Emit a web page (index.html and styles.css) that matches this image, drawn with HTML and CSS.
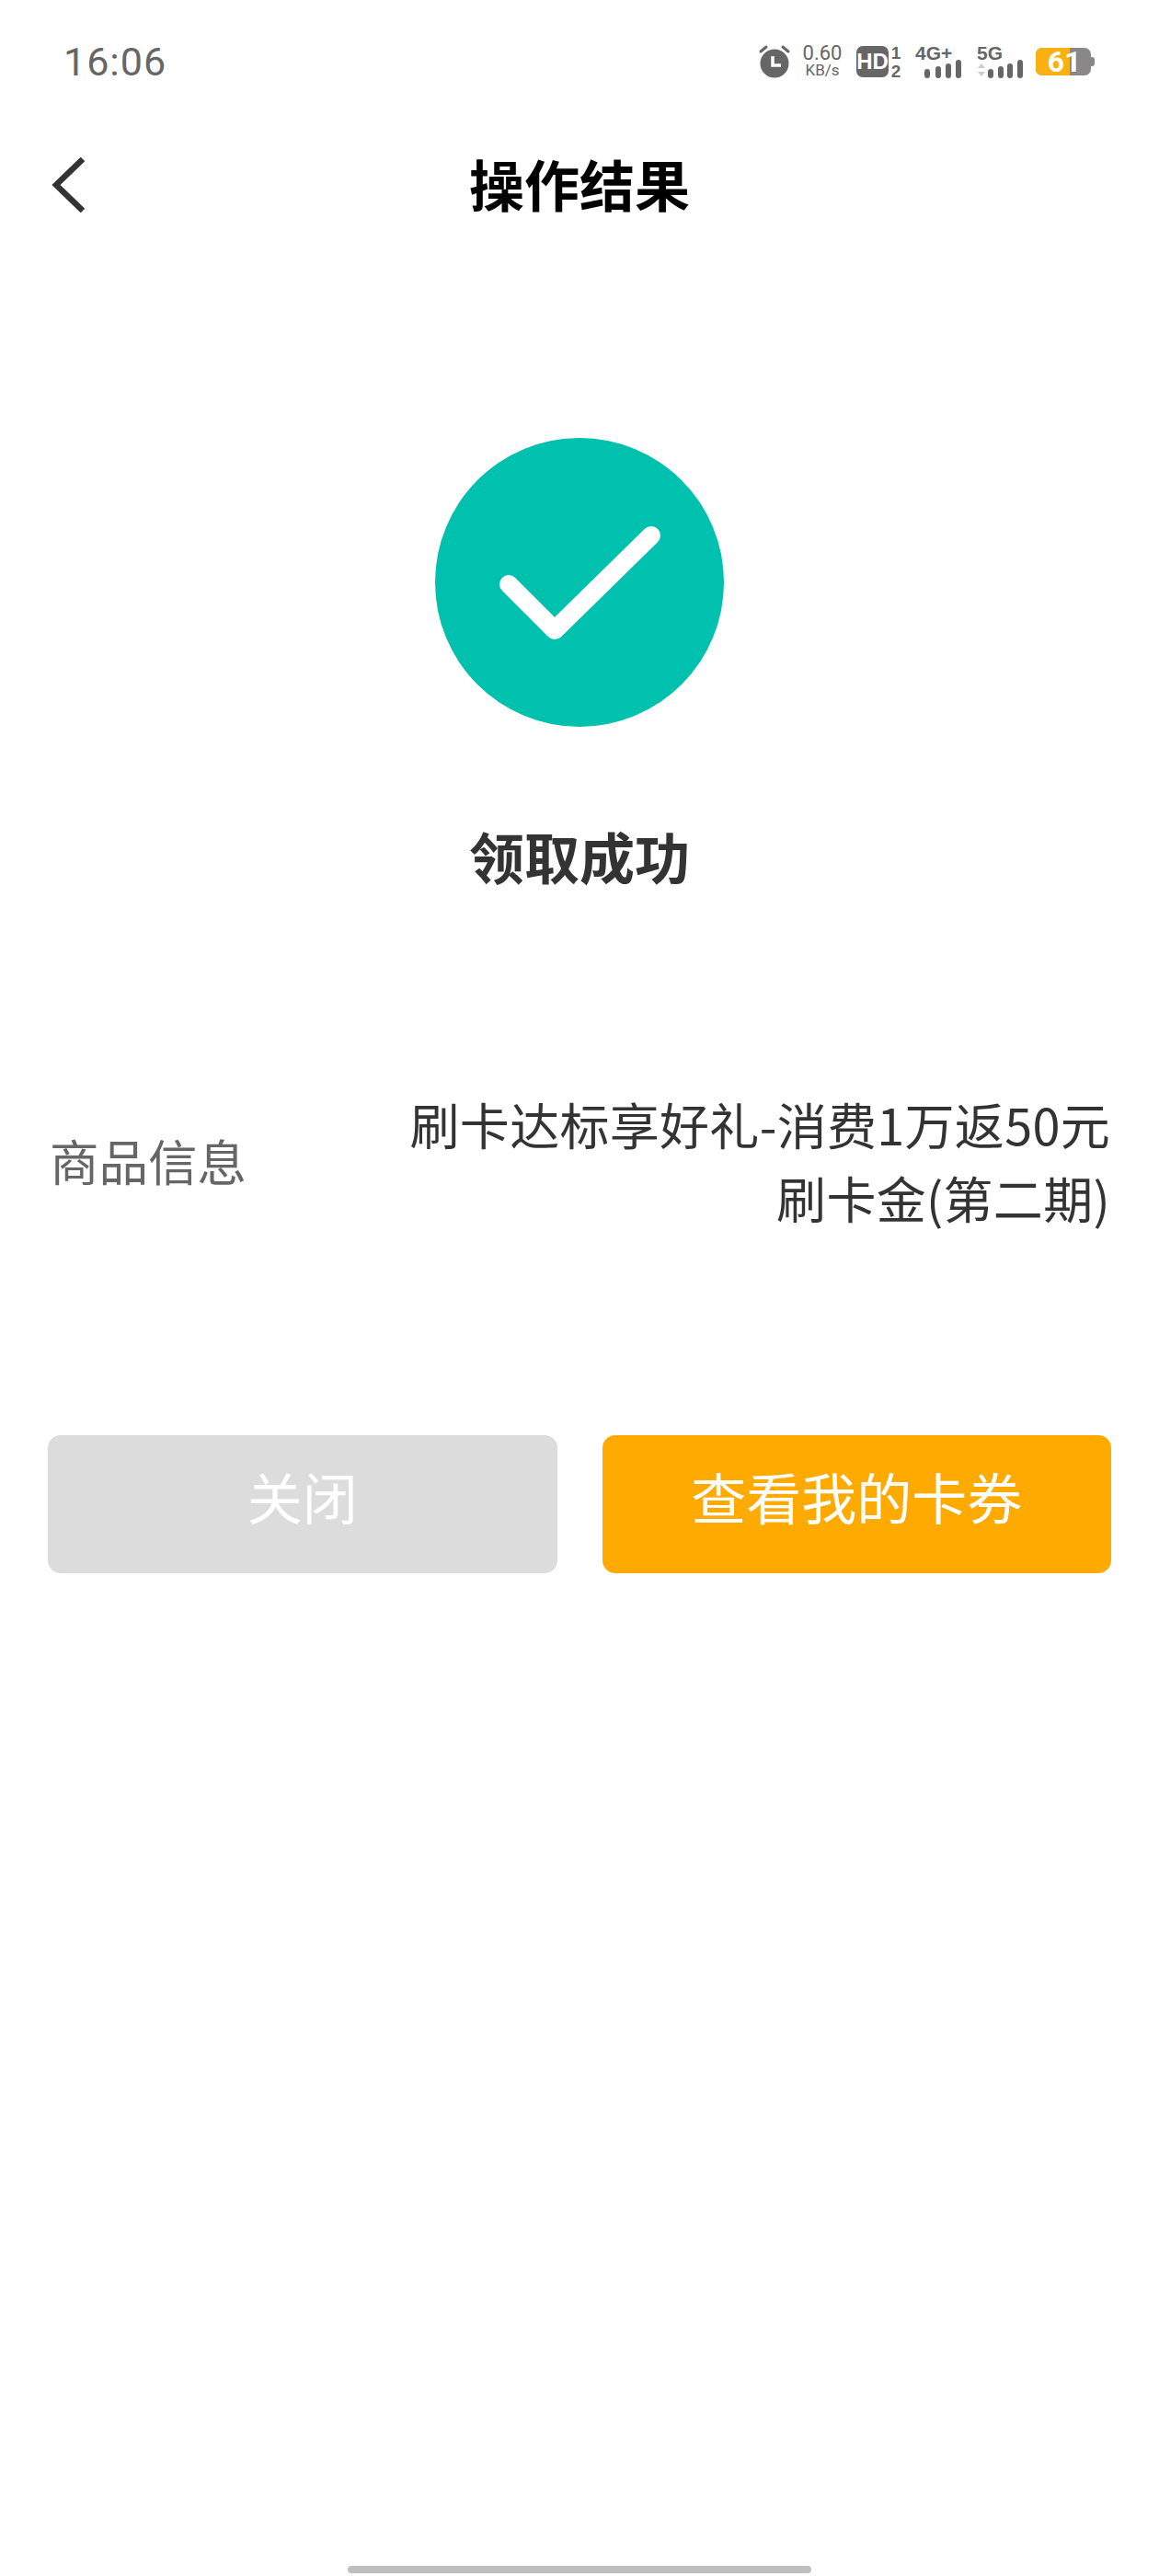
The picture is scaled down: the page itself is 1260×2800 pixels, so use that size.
FILE: index.html
```html
<!DOCTYPE html>
<html lang="zh-CN">

<head>
  <meta charset="UTF-8">
  <meta name="viewport" content="width=device-width, initial-scale=1.0">
  <title>操作结果</title>

  <link rel="stylesheet" href="styles.css">
</head>

<body>
  <!-- status bar -->
  <div class="status-bar">
    <span class="time">16:06</span>
    <div class="status-icons">
      <svg class="ico" width="36" height="40" viewBox="0 0 36 40">
        <circle cx="18" cy="22" r="15.5" fill="#666"/>
        <path d="M3 9l6-5M33 9l-6-5" stroke="#666" stroke-width="3" stroke-linecap="round"/>
        <path d="M16 14v10h9" fill="none" stroke="#fff" stroke-width="3.5"/>
      </svg>
      <svg class="ico speed" width="46" height="40" viewBox="0 0 46 40">
        <text x="23" y="18" class="t-speed">0.60</text>
        <text x="23" y="35" class="t-unit">KB/s</text>
      </svg>
      <svg class="ico hd" width="50" height="36" viewBox="0 0 50 36">
        <rect x="0" y="1" width="35" height="34" rx="7" fill="#666"/>
        <text x="17.5" y="26" class="t-hd">HD</text>
        <text x="43" y="15" class="t-sim">1</text>
        <text x="43" y="35" class="t-sim">2</text>
      </svg>
      <svg class="ico net" width="52" height="36" viewBox="0 0 52 36">
        <text x="0" y="16" class="t-net">4G+</text>
        <rect x="10" y="26" width="6" height="10" rx="3" fill="#666"/>
        <rect x="22" y="23" width="6" height="13" rx="3" fill="#666"/>
        <rect x="33" y="20" width="6" height="16" rx="3" fill="#666"/>
        <rect x="44" y="16" width="6" height="20" rx="3" fill="#666"/>
      </svg>
      <svg class="ico net2" width="52" height="36" viewBox="0 0 52 36">
        <text x="0" y="16" class="t-net">5G</text>
        <path d="M1 25l4-5 4 5zM1 29l4 5 4-5z" fill="#ccc"/>
        <rect x="12" y="26" width="6" height="10" rx="3" fill="#666"/>
        <rect x="23" y="23" width="6" height="13" rx="3" fill="#666"/>
        <rect x="33" y="20" width="6" height="16" rx="3" fill="#666"/>
        <rect x="44" y="16" width="6" height="20" rx="3" fill="#666"/>
      </svg>
      <svg class="ico battery" width="64" height="32" viewBox="0 0 64 32">
        <rect x="0" y="1" width="60" height="30" rx="7" fill="#888"/>
        <path d="M7 1h30v30H7a7 7 0 0 1-7-7V8a7 7 0 0 1 7-7z" fill="#fbb012"/>
        <path d="M60 11h1a3 3 0 0 1 3 3v4a3 3 0 0 1-3 3h-1z" fill="#888"/>
        <text x="31" y="27" class="t-batt">61</text>
      </svg>
    </div>
  </div>

  <!-- title -->
  <div class="nav">
    <svg class="back" width="40" height="60" viewBox="0 0 40 60">
      <path d="M35 2L6 30l29 28" fill="none" stroke="#333" stroke-width="6.5"/>
    </svg>
    <h1>操作结果</h1>
    <span></span>
  </div>

  <div class="result">
    <svg class="ok-icon" width="314" height="314" viewBox="0 0 314 314">
      <circle cx="157" cy="157" r="157" fill="#00c1ad"/>
      <path d="M80 159l50 50L235 106" fill="none" stroke="#fff" stroke-width="20" stroke-linecap="round" stroke-linejoin="round"/>
    </svg>
    <h2>领取成功</h2>
  </div>

  <div class="info">
    <span class="info-label">商品信息</span>
    <p class="info-value">刷卡达标享好礼-消费1万返50元<br>刷卡金(第二期)</p>
  </div>

  <div class="btns">
    <a class="btn btn-close">关闭</a>
    <a class="btn btn-view">查看我的卡券</a>
  </div>

  <div class="home-bar"></div>
</body>

</html>
```

FILE: styles.css
```css
* {
  margin: 0;
  padding: 0;
  box-sizing: border-box;
}

body {
  display: flex;
  flex-direction: column;
  height: 2800px;
  background: #fff;
  font-family: "Noto Sans CJK SC", "Liberation Sans", sans-serif;
  overflow: hidden;
}

/* status bar */
.status-bar {
  display: flex;
  justify-content: space-between;
  align-items: center;
  height: 134px;
  padding: 0 70px 0 69px;
}

.time {
  font-family: Roboto, sans-serif;
  font-size: 43px;
  letter-spacing: 1px;
  color: #666;
}

.status-icons {
  display: flex;
  align-items: center;
}

.ico {
  display: block;
  overflow: visible;
}

.speed {
  margin-left: 11px;
}

.hd {
  margin-left: 14px;
}

.net {
  margin-left: 14px;
}

.net2 {
  margin-left: 15px;
}

.battery {
  margin-left: 12px;
}

.t-speed,
.t-unit {
  font-family: Roboto, sans-serif;
  fill: #666;
  text-anchor: middle;
}

.t-speed {
  font-size: 22px;
}

.t-unit {
  font-size: 17px;
}

.t-hd {
  font-family: "Liberation Sans", sans-serif;
  font-size: 24px;
  font-weight: 700;
  fill: #fff;
  text-anchor: middle;
}

.t-sim {
  font-family: "Liberation Sans", sans-serif;
  font-size: 19px;
  font-weight: 700;
  fill: #666;
  text-anchor: middle;
}

.t-net {
  font-family: "Liberation Sans", sans-serif;
  font-size: 21px;
  font-weight: 700;
  fill: #666;
}

.t-batt {
  font-family: Roboto, sans-serif;
  font-size: 32px;
  font-weight: 700;
  fill: #fff;
  text-anchor: middle;
}

/* title */
.nav {
  display: grid;
  grid-template-columns: 1fr auto 1fr;
  align-items: center;
  height: 136px;
  padding: 0 0 6px 55px;
}

.nav h1 {
  font-size: 60px;
  line-height: 80px;
  font-weight: 700;
  color: #000;
  margin-left: -55px;
}

.back {
  margin-bottom: -4px;
}

.result {
  display: flex;
  flex-direction: column;
  align-items: center;
  margin-top: 206px;
}

.result h2 {
  margin-top: 100px;
  font-size: 60px;
  line-height: 80px;
  font-weight: 700;
  color: #333;
}

/* goods info */
.info {
  display: flex;
  justify-content: space-between;
  align-items: center;
  margin-top: 212px;
  padding: 0 53px 0 54px;
}

.info-label {
  margin-bottom: 3px;
  font-size: 53.5px;
  color: #666;
}

.info-value {
  font-size: 54px;
  line-height: 80px;
  letter-spacing: 0.3px;
  text-align: right;
  color: #333;
}

/* buttons */
.btns {
  display: flex;
  gap: 49px;
  margin-top: 218px;
  padding: 0 52px;
}

.btn {
  flex: 1;
  height: 150px;
  border-radius: 14px;
  font-size: 60px;
  line-height: 132px;
  text-align: center;
  color: #fff;
}

.btn-close {
  background: #dcdcdc;
}

.btn-view {
  background: #ffaa00;
}

.home-bar {
  width: 504px;
  height: 8px;
  margin: auto auto 3px;
  border-radius: 4px;
  background: #bfbfbf;
}
```
